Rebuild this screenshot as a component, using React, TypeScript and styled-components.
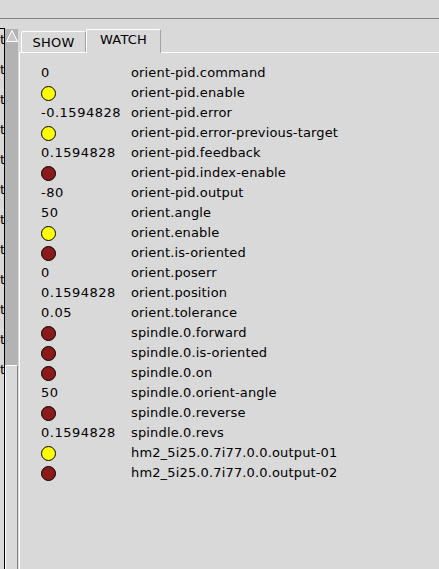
import styled, { createGlobalStyle } from 'styled-components'

const GlobalStyle = createGlobalStyle`
    html, body {
        margin: 0;
        padding: 0;
        background: #d9d9d9;
    }
    body {
        font-family: 'DejaVu Sans', 'Liberation Sans', sans-serif;
        font-size: 13px;
        color: #000;
    }
`

type Pin =
    | { name: string; kind: 'value'; value: string }
    | { name: string; kind: 'led'; on: boolean }

const pins: Pin[] = [
    { name: 'orient-pid.command', kind: 'value', value: '0' },
    { name: 'orient-pid.enable', kind: 'led', on: true },
    { name: 'orient-pid.error', kind: 'value', value: '-0.1594828' },
    { name: 'orient-pid.error-previous-target', kind: 'led', on: true },
    { name: 'orient-pid.feedback', kind: 'value', value: '0.1594828' },
    { name: 'orient-pid.index-enable', kind: 'led', on: false },
    { name: 'orient-pid.output', kind: 'value', value: '-80' },
    { name: 'orient.angle', kind: 'value', value: '50' },
    { name: 'orient.enable', kind: 'led', on: true },
    { name: 'orient.is-oriented', kind: 'led', on: false },
    { name: 'orient.poserr', kind: 'value', value: '0' },
    { name: 'orient.position', kind: 'value', value: '0.1594828' },
    { name: 'orient.tolerance', kind: 'value', value: '0.05' },
    { name: 'spindle.0.forward', kind: 'led', on: false },
    { name: 'spindle.0.is-oriented', kind: 'led', on: false },
    { name: 'spindle.0.on', kind: 'led', on: false },
    { name: 'spindle.0.orient-angle', kind: 'value', value: '50' },
    { name: 'spindle.0.reverse', kind: 'led', on: false },
    { name: 'spindle.0.revs', kind: 'value', value: '0.1594828' },
    { name: 'hm2_5i25.0.7i77.0.0.output-01', kind: 'led', on: true },
    { name: 'hm2_5i25.0.7i77.0.0.output-02', kind: 'led', on: false },
]

// the tree list on the left is scrolled almost out of view, only line ends show
const treeEnds = Array.from({ length: 12 }, (_, i) => i)

const App = () => {
    return (
        <Window>
            <GlobalStyle />
            <TopBar />
            <Body>
                <TreeList>
                    <TreeItems>
                        {treeEnds.map((i) => (
                            <TreeItem key={i}>
                                <span>t</span>
                            </TreeItem>
                        ))}
                    </TreeItems>
                </TreeList>
                <Scrollbar>
                    <Trough>
                        <ArrowUp width="12" height="12" viewBox="0 0 12 12">
                            <polygon points="6,0.5 11.5,11.5 0.5,11.5" fill="#c8c8c8" stroke="#ffffff" strokeWidth="1" />
                        </ArrowUp>
                    </Trough>
                    <Slider />
                </Scrollbar>
                <Notebook>
                    <TabRow>
                        <Tab $width={65}>SHOW</Tab>
                        <Tab $width={75} $active>WATCH</Tab>
                    </TabRow>
                    <Pane>
                        {pins.map((pin) => (
                            <Row key={pin.name}>
                                <Value>
                                    {pin.kind === 'value' ? (
                                        pin.value
                                    ) : (
                                        <Led $on={pin.on} />
                                    )}
                                </Value>
                                <Name>{pin.name}</Name>
                            </Row>
                        ))}
                    </Pane>
                </Notebook>
            </Body>
        </Window>
    )
}

export default App

const Window = styled.div`
    width: 439px;
    height: 569px;
    overflow: hidden;
    background: #d9d9d9;
    display: flex;
    flex-direction: column;
`

const TopBar = styled.div`
    height: 18px;
    flex-shrink: 0;
    border-bottom: 1px solid #828282;
`

const Body = styled.div`
    flex: 1;
    display: flex;
    min-height: 0;
`

const TreeList = styled.div`
    width: 4px;
    margin-top: 9px;
    border-top: 1px solid #000;
    border-right: 1px solid #000;
    overflow: hidden;
    background: #d9d9d9;
`

const TreeItems = styled.div`
    margin-top: -4px;
`

const TreeItem = styled.div`
    height: 30px;
    line-height: 30px;
    display: flex;
    justify-content: flex-end;
    white-space: nowrap;
    span {
        margin-right: -1px;
    }
`

const Scrollbar = styled.div`
    width: 13px;
    margin-top: 10px;
    display: flex;
    flex-direction: column;
`

const Trough = styled.div`
    flex: 1;
    background: #b3b3b3;
    display: flex;
    justify-content: center;
    padding-top: 1px;
`

const ArrowUp = styled.svg`
    display: block;
`

const Slider = styled.div`
    height: 204px;
    box-sizing: border-box;
    background: #d9d9d9;
    border-top: 1px solid #ffffff;
    border-left: 1px solid #ffffff;
    border-right: 1px solid #828282;
`

const Notebook = styled.div`
    flex: 1;
    margin-left: 1px;
    margin-top: 10px;
    display: flex;
    flex-direction: column;
`

const TabRow = styled.div`
    height: 23px;
    display: flex;
    align-items: flex-end;
    padding-left: 2px;
    position: relative;
    z-index: 1;
`

const Tab = styled.div<{ $active?: boolean; $width: number }>`
    box-sizing: border-box;
    width: ${({ $width }) => $width}px;
    height: ${({ $active }) => ($active ? '24px' : '21px')};
    margin-bottom: ${({ $active }) => ($active ? '-1px' : '0')};
    padding-top: ${({ $active }) => ($active ? '2px' : '3px')};
    text-align: center;
    background: #d9d9d9;
    border-top: 1px solid #ffffff;
    border-left: 1px solid #ffffff;
    border-right: 1px solid #a3a3a3;
    border-radius: 2px 2px 0 0;
    line-height: 15px;
    font-size: 13px;
    letter-spacing: 0.2px;
`

const Pane = styled.div`
    flex: 1;
    border-top: 1px solid #ffffff;
    border-left: 1px solid #ffffff;
    padding: 10px 0 0 21px;
`

const Row = styled.div`
    display: grid;
    grid-template-columns: 90px 1fr;
    height: 20px;
    line-height: 20px;
    align-items: center;
    white-space: nowrap;
`

const Value = styled.div`
    display: flex;
    align-items: center;
    height: 20px;
    letter-spacing: 0.5px;
`

const Name = styled.div`
    display: flex;
    align-items: center;
    height: 20px;
    letter-spacing: 0.15px;
`

const Led = styled.span<{ $on: boolean }>`
    display: block;
    box-sizing: border-box;
    width: 15px;
    height: 15px;
    border-radius: 50%;
    border: 1px solid #000;
    background: ${({ $on }) => ($on ? '#ffff00' : '#8b1a1a')};
`
